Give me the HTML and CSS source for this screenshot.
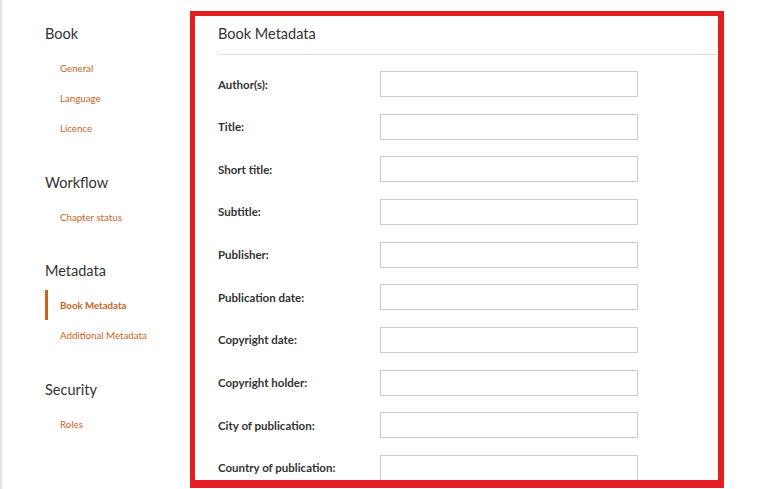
FILE: index.html
```html
<!DOCTYPE html>
<html>
<head>
<meta charset="utf-8">
<link rel="stylesheet" href="styles.css">
</head>
<body>
<div class="page">
  <nav class="sidebar">
    <div class="section">
      <div class="heading">Book</div>
      <a class="item">General</a>
      <a class="item">Language</a>
      <a class="item">Licence</a>
    </div>
    <div class="section">
      <div class="heading">Workflow</div>
      <a class="item">Chapter status</a>
    </div>
    <div class="section">
      <div class="heading">Metadata</div>
      <a class="item active">Book Metadata</a>
      <a class="item">Additional Metadata</a>
    </div>
    <div class="section">
      <div class="heading">Security</div>
      <a class="item">Roles</a>
    </div>
  </nav>
  <main class="panel">
    <div class="panel-title">Book Metadata</div>
    <form class="form">
      <label class="label">Author(s):</label><input class="field" type="text">
      <label class="label">Title:</label><input class="field" type="text">
      <label class="label">Short title:</label><input class="field" type="text">
      <label class="label">Subtitle:</label><input class="field" type="text">
      <label class="label">Publisher:</label><input class="field" type="text">
      <label class="label">Publication date:</label><input class="field" type="text">
      <label class="label">Copyright date:</label><input class="field" type="text">
      <label class="label">Copyright holder:</label><input class="field" type="text">
      <label class="label">City of publication:</label><input class="field" type="text">
      <label class="label">Country of publication:</label><input class="field" type="text">
    </form>
  </main>
</div>
</body>
</html>
```
FILE: styles.css
```css
html, body {
  margin: 0;
  padding: 0;
  background: #fff;
  font-family: Lato, "Liberation Sans", sans-serif;
  color: #333;
}
.page {
  display: flex;
  align-items: flex-start;
  height: 489px;
  overflow: hidden;
  border-left: 2px solid #e2e2e2;
  box-sizing: border-box;
}
.sidebar {
  width: 188px;
  padding: 24px 0 0 43px;
  box-sizing: border-box;
  flex-shrink: 0;
}
.section {
  display: flex;
  flex-direction: column;
  margin-bottom: 29.5px;
}
.heading {
  font-size: 14.5px;
  line-height: 20px;
  color: #333;
  margin-bottom: 9px;
}
.item {
  display: block;
  font-size: 9.7px;
  line-height: 30px;
  height: 30px;
  color: #c8641e;
  border-left: 3px solid transparent;
  padding-left: 12px;
}
.item.active {
  border-left-color: #c8641e;
  font-weight: bold;
}
.panel {
  margin-top: 11px;
  width: 534px;
  height: 477px;
  border: 5px solid #e31e24;
  border-bottom-width: 8px;
  border-right-width: 6px;
  box-sizing: border-box;
  overflow: hidden;
  padding-left: 23px;
  flex-shrink: 0;
}
.panel-title {
  font-size: 14.5px;
  line-height: 20px;
  padding-top: 8px;
  padding-bottom: 10px;
  border-bottom: 1px solid #dedede;
  color: #333;
}
.form {
  display: grid;
  grid-template-columns: 162px 258px;
  row-gap: 16.67px;
  margin-top: 16px;
  align-items: center;
}
.label {
  font-size: 11.5px;
  font-weight: bold;
  color: #333;
}
.field {
  box-sizing: border-box;
  width: 258px;
  height: 26px;
  margin: 0;
  border: 1px solid #cbcbcb;
  background: #fff;
  padding: 0 6px;
  outline: none;
}
```
